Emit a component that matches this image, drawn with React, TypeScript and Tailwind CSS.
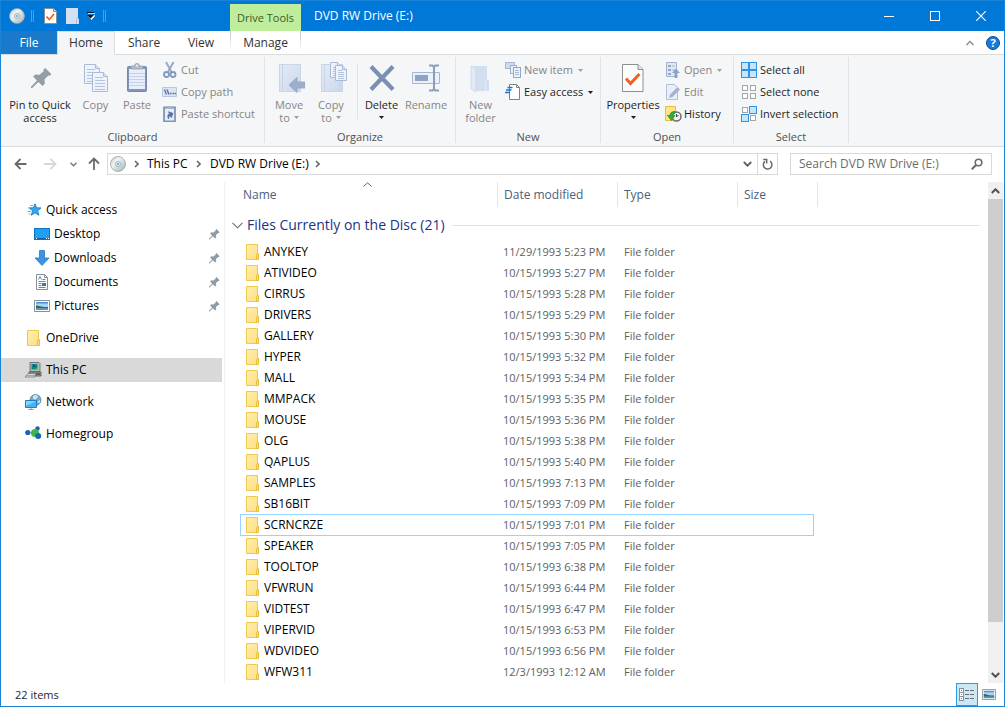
import React, { type ReactNode } from "react";

/* ---------- drawing helpers ---------- */

type ArtProps = { w: number; h: number; crisp?: boolean; children: ReactNode };

function Art({ w, h, crisp, children }: ArtProps) {
  return (
    <svg
      width={w}
      height={h}
      viewBox={`0 0 ${w} ${h}`}
      fill="none"
      aria-hidden="true"
      className="shrink-0"
      shapeRendering={crisp ? "crispEdges" : "auto"}
    >
      {children}
    </svg>
  );
}

const PIN_PATH =
  "M14.2 0L20.4 6.3L18.8 7.8L17.4 7.4L13.4 11.6L13.8 15.6L11.6 18L7.4 14L1.2 20L0 20V18.8L6 12.6L2 8.6L4.4 6.4L8.6 6.8L12.8 3L12.4 1.6Z";

function Disc() {
  return (
    <Art w={16} h={16}>
      <defs>
        <linearGradient id="disc" x1="0" y1="0" x2="1" y2="1">
          <stop offset="0" stopColor="#b9c0c4" />
          <stop offset=".35" stopColor="#f1f3f3" />
          <stop offset=".6" stopColor="#cfdcd8" />
          <stop offset="1" stopColor="#a9b0b4" />
        </linearGradient>
      </defs>
      <circle cx="8" cy="8" r="7.5" fill="url(#disc)" stroke="#9aa1a6" strokeWidth=".8" />
      <circle cx="8" cy="8" r="2.6" fill="#d5e6ee" stroke="#8fb6cc" strokeWidth=".8" />
      <circle cx="8" cy="8" r="1" fill="#6aa6c8" />
    </Art>
  );
}

function FolderIcon() {
  return (
    <Art w={13} h={16}>
      <defs>
        <linearGradient id="fold" x1="0" y1="0" x2="1" y2="1">
          <stop offset="0" stopColor="#ffefb0" />
          <stop offset="1" stopColor="#ffdf80" />
        </linearGradient>
      </defs>
      <path d="M.5 .5H11.5V15.5H.5Z" fill="url(#fold)" stroke="#efc94c" />
      <path d="M10.5 15.5V11L11.5 9.5H12.5V15.5Z" fill="#ffe28a" stroke="#e8bd3a" />
    </Art>
  );
}

function Pin() {
  return (
    <svg width={11} height={11} viewBox="0 0 21 21" aria-hidden="true" className="shrink-0">
      <path d={PIN_PATH} fill="#8f9ca6" />
    </svg>
  );
}

const PinLarge = () => (
  <Art w={32} h={32}>
    <path transform="translate(7 7)" d={PIN_PATH} fill="#929da5" />
  </Art>
);

function Sheet({ x, y, w, h, step }: { x: number; y: number; w: number; h: number; step: number }) {
  const lines: number[] = [];
  for (let ly = y + 5; ly < y + h - 2; ly += step) lines.push(ly);
  return (
    <g>
      <path
        d={`M${x + 0.5} ${y + 0.5}h${w - 5}l4 4v${h - 5}h${-(w - 1)}z`}
        fill="#eef3fb"
        stroke="#a9bbd8"
      />
      <path d={`M${x + w - 4.5} ${y + 0.5}v4h4`} fill="#d9e3f2" stroke="#a9bbd8" />
      {lines.map((ly) => (
        <path key={ly} d={`M${x + 3} ${ly + 0.5}h${ly < y + 6 ? w - 8 : w - 6}`} stroke="#b4c3de" />
      ))}
    </g>
  );
}

const CopyLarge = () => (
  <Art w={32} h={32}>
    <Sheet x={4} y={3} w={16} h={20} step={3} />
    <Sheet x={12} y={11} w={16} h={20} step={3} />
  </Art>
);

const PasteLarge = () => (
  <Art w={32} h={32}>
    <rect x="6.5" y="5.5" width="19" height="25" rx="1" fill="#8194b8" stroke="#7588ad" />
    <rect x="8" y="8" width="16" height="20" fill="#e8effa" />
    {[12, 15, 18, 21, 24].map((y) => (
      <path key={y} d={`M8 ${y + 0.5}h16`} stroke="#c3d2ea" />
    ))}
    <path d="M10 8V5h3.5a2.5 2.5 0 0 1 5 0H22V8Z" fill="#b3bccb" stroke="#939fb5" strokeWidth=".8" />
    <circle cx="16" cy="4.6" r="1" fill="#f5f6f7" />
  </Art>
);

const PaleFolder = ({ x }: { x: number }) => (
  <g>
    <defs>
      <linearGradient id="pale" x1="0" y1="0" x2="1" y2="1">
        <stop offset="0" stopColor="#e4ebf6" />
        <stop offset="1" stopColor="#cbd8ea" />
      </linearGradient>
    </defs>
    <rect x={x + 0.5} y="3.5" width="21" height="27" fill="url(#pale)" stroke="#c9d5e8" />
    <path d={`M${x + 3.5} 3.5v27M${x + 18.5} 30.5v-9l3-2`} stroke="#c6d3e7" />
  </g>
);

const MoveLarge = () => (
  <Art w={32} h={32}>
    <PaleFolder x={6} />
    <path d="M16 24L24 16.5V21H32V27H24V31.5Z" fill="#9dafcb" stroke="#8fa3c2" strokeWidth=".8" />
  </Art>
);

const CopyToLarge = () => (
  <Art w={32} h={32}>
    <PaleFolder x={6} />
    <Sheet x={15} y={1} w={12} h={16} step={2} />
    <Sheet x={20} y={4} w={12} h={16} step={2} />
  </Art>
);

const DeleteLarge = () => (
  <Art w={32} h={32}>
    <path d="M5 5.5L27 28.5M27 5.5L5 28.5" stroke="#7b8fb4" strokeWidth="4.2" />
  </Art>
);

const RenameLarge = () => (
  <Art w={32} h={32}>
    <path d="M2.500 11.500h27v11h-27z" fill="#eaf1fb" stroke="#a6b8d6" />
    <path d="M5 14h13v6H5z" fill="#8fa3c5" />
    <path
      d="M19 4.500h3.500l1.500 1.500 1.500-1.500H29M19 29.500h3.500l1.500-1.500 1.500 1.500H29M24 6v22"
      stroke="#8a9dbf"
      strokeWidth="2"
    />
  </Art>
);

const NewFolderLarge = () => (
  <Art w={32} h={32}>
    <path d="M8 5H22V18L24 20V30H8Z" fill="#d3dfee" />
    <path d="M6 5L11 8V31L6 28Z" fill="#e2eaf5" stroke="#c9d6e8" strokeWidth=".8" />
    <path d="M20.500 30V20.500L22 18.500" stroke="#e3ebf5" />
  </Art>
);

const PropertiesLarge = () => (
  <Art w={32} h={32}>
    <path d="M5.500 3.500H21l5 5V30.500H5.500Z" fill="#fdfdfd" stroke="#8b8f93" />
    <path d="M21 3.500V8.500H26" fill="#e3e5e7" stroke="#8b8f93" />
    <path d="M9 17.500L13.500 22.500L22.500 13" stroke="#f2611c" strokeWidth="3" />
  </Art>
);

const CutIcon = () => (
  <Art w={16} h={16}>
    <path d="M4 0L9.500 10M11.500 0L6 10" stroke="#9aaac5" strokeWidth="2" />
    <circle cx="4.500" cy="12.500" r="2.500" stroke="#8398bd" strokeWidth="1.800" />
    <circle cx="11" cy="12.500" r="2.500" stroke="#8398bd" strokeWidth="1.800" />
  </Art>
);

const CopyPathIcon = () => (
  <Art w={16} h={16}>
    <path d="M.5 3.500h14v9H.5z" fill="#dbe5f4" stroke="#b9c8e0" />
    <path d="M2.500 5.500l2 5M5 5.500l2 5" stroke="#5f749c" strokeWidth="1.400" />
    <path d="M8 9.500h1.500M10.500 9.500H12M12.500 9.500h1.500" stroke="#5f749c" strokeWidth="1.500" />
  </Art>
);

const PasteShortcutIcon = () => (
  <Art w={16} h={16}>
    <path d="M2 1.500h11v14H2z" fill="#e4ecf8" stroke="#8195b9" strokeWidth="1.800" />
    <path d="M5 0h5v3H5z" fill="#a9b4c8" />
    <path
      d="M5 12c0-3 1-4.500 3-4.500V5.500l3.500 3.200L8 12V9.700C6.500 9.700 6 10.500 5 12Z"
      fill="#5b719c"
      stroke="#5b719c"
      strokeWidth=".6"
      transform="rotate(-25 8 9)"
    />
  </Art>
);

const NewItemIcon = () => (
  <Art w={16} h={16} crisp>
    <path d="M.5 .5h9v6h-9z" fill="#cfdbee" stroke="#a9b9d5" />
    <path d="M5.500 3.500h6v8h-6z" fill="#e8eff9" stroke="#a0b1cf" />
    <path d="M8.500 5.500h7v10h-7z" fill="#eef3fb" stroke="#94a7c9" />
    <path d="M10 8.500h4M10 10.500h4M10 12.500h4" stroke="#a9b9d5" />
  </Art>
);

const EasyAccessIcon = () => (
  <Art w={16} h={16}>
    <path d="M4.500 .5h7l3 3v12h-10z" fill="#fff" stroke="#7f8386" />
    <path d="M11.500 .5v3h3" stroke="#7f8386" />
    <path d="M2.500 3.500h5M1 6h5.500M0 8.500h5" stroke="#1979ca" strokeWidth="1.400" />
  </Art>
);

const OpenIcon = () => (
  <Art w={16} h={16}>
    <path d="M1.500 .5h10v14h-10z" fill="#dfe8f5" stroke="#a3b4d1" />
    <path d="M3 3h3v2H3zM3 7h3v2H3zM3 11h3v2H3z" fill="#94a7c9" />
    <path d="M7 4h3M7 8h3" stroke="#a3b4d1" />
    <path d="M7 11l4-4.500 4 4.500h-2.500v5H9.500v-5z" fill="#8fa3c5" />
  </Art>
);

const EditIcon = () => (
  <Art w={16} h={16}>
    <path d="M1.500 .5h8l3 3v12h-11z" fill="#e8eff9" stroke="#b0bfd9" />
    <path d="M4 14l1-3.500L12.500 3l2.500 2.500L7.500 13z" fill="#a3b4d1" />
  </Art>
);

const HistoryIcon = () => (
  <Art w={17} h={16}>
    <path d="M.5 .5h10v14h-10z" fill="#ffe28a" stroke="#e8bd3a" />
    <circle cx="11.500" cy="10.500" r="4.500" fill="#f1f2f3" stroke="#6b6f73" strokeWidth="1.500" />
    <path d="M11.500 8v3l2-2" stroke="#444" />
    <path
      d="M10 5.500C6.500 5.500 5 7 5 9.500H2.500L6.500 14.500L10 9.500H8C8 8 8.500 7.500 10 7.500Z"
      fill="#2fae3c"
      stroke="#1c8528"
      strokeWidth=".7"
    />
  </Art>
);

function SelectIcon({ on }: { on: boolean[] }) {
  const at = [
    [1, 1],
    [9, 1],
    [1, 9],
    [9, 9],
  ];
  return (
    <Art w={16} h={16} crisp>
      {at.map(([x, y], i) =>
        on[i] ? (
          <rect key={i} x={x - 0.5} y={y - 0.5} width={7} height={7} fill="#c5e5fb" stroke="#2e95e6" />
        ) : (
          <rect key={i} x={x + 0.5} y={y + 0.5} width={5} height={5} fill="#fdfdfd" stroke="#a3a6a9" />
        ),
      )}
      {on.every(Boolean) && <path d="M0 7.500h16M7.500 0v16" stroke="#2e95e6" strokeWidth="2" />}
    </Art>
  );
}

const QuickAccessIcon = () => (
  <Art w={16} h={16}>
    <path
      d="M9 1.800l1.600 4 4.400.1-3.400 2.900 1.300 4.500-3.900-2.500-3.700 2.500 1.300-4.500L3.200 5.900l4.200-.1z"
      fill="#35a5ee"
      stroke="#1b7fcb"
      strokeWidth=".9"
    />
    <path d="M4 3.500h3M2 6h2M1.500 9.500h3.500M2.500 12h2" stroke="#5fb8ef" />
  </Art>
);

const DesktopIcon = () => (
  <Art w={16} h={12} crisp>
    <path d="M.5 .5h15v11H.5z" fill="#1fa0f5" stroke="#0d74c4" />
    <path d="M1 10.500h14" stroke="#0b62a8" />
    <path d="M2 10.500h1M12 10.500h1M13.500 10.500h1" stroke="#fff" />
  </Art>
);

const DownloadsIcon = () => (
  <Art w={16} h={16}>
    <path d="M5.500 .5h5v7.500h4.500L8 15.500 1 8h4.500z" fill="#3b94e4" stroke="#2a78c2" strokeWidth=".8" />
  </Art>
);

const DocumentsIcon = () => (
  <Art w={16} h={16}>
    <path d="M2.500 .5h8l3 3v12h-11z" fill="#fff" stroke="#8b8f93" />
    <path d="M10.500 .5v3h3" stroke="#8b8f93" />
    <path d="M4.500 5.500L6 2.500l1.500 3M8.500 5.500h3M4.500 7.500h7M4.500 9.500h3M4.500 11.500h3M4.500 13.500h7" stroke="#3d93d8" />
    <path d="M8 9h4v3H8z" fill="#3a7a9e" />
  </Art>
);

const PicturesIcon = ({ small }: { small?: boolean }) => (
  <Art w={small ? 14 : 16} h={small ? 11 : 12}>
    <g transform={small ? "scale(.875 .917)" : undefined}>
      <path d="M.5 .5h15v11H.5z" fill="#fff" stroke="#8b8f93" />
      <path d="M2 2h12v8H2z" fill="#a5d3f5" />
      <path d="M2 2h12v1.500H2z" fill="#4e8fdc" />
      <path d="M2 5.500C5 5.500 7 7.500 14 7v1.500H2z" fill="#2e6b4f" />
      <path d="M2 8.500h12V10H2z" fill="#5b93c0" />
    </g>
  </Art>
);

const ComputerIcon = () => (
  <Art w={17} h={16}>
    <path d="M5 .5h9l1 1v8H5z" fill="#b9bdb9" stroke="#5d605d" strokeWidth=".8" />
    <path d="M6.500 2h6v5.500h-6z" fill="#0a8a8a" />
    <path d="M8 3h2v2H8z" fill="#1b3fa0" />
    <path d="M11 6h1.500v1.500H11z" fill="#19e04b" />
    <path d="M4 10h12v4H9L4 12z" fill="#9b9e9b" stroke="#4e514e" strokeWidth=".8" />
    <path d="M11 12h4" stroke="#222" />
    <path d="M0 15l3-3.500h8L9.500 15z" fill="#d8dad8" stroke="#6b6e6b" strokeWidth=".7" />
    <path d="M2.500 13.500h7" stroke="#777" strokeDasharray="1 1" />
  </Art>
);

const NetworkIcon = () => (
  <Art w={17} h={16}>
    <circle cx="10.500" cy="6" r="5.500" fill="#6ea9cf" stroke="#4d7f9f" strokeWidth=".7" />
    <path d="M8 2c2-1.500 4-1 5 .5l-2 3-3-.5zM12 8l3-2v3z" fill="#cfe6d8" />
    <path d="M.5 6.500h11v7H.5z" fill="#49b1f3" stroke="#1c7fc8" />
    <path d="M1 7l10 0L1 12z" fill="#8dd0fa" />
    <path d="M3.500 15.500h5M6 14v1" stroke="#8c9aa5" />
  </Art>
);

const HomegroupIcon = () => (
  <Art w={17} h={16}>
    <path d="M3 7l7-1M12 3l-1 4M12 11l-2-3" stroke="#8cc7a5" />
    <circle cx="2.800" cy="6.500" r="2.600" fill="#1666b4" />
    <circle cx="12.500" cy="2.500" r="2.200" fill="#1666b4" />
    <circle cx="10" cy="7" r="4" fill="#3fb54a" />
    <circle cx="13.200" cy="10" r="3" fill="#1666b4" />
  </Art>
);

type ChevronProps = { d: string; w: number; h: number; color?: string; width?: number };

const Chevron = ({ d, w, h, color = "#5f5f5f", width = 1.5 }: ChevronProps) => (
  <Art w={w} h={h}>
    <path d={d} stroke={color} strokeWidth={width} />
  </Art>
);

const Caret = ({ muted }: { muted?: boolean }) => (
  <Art w={5} h={3}>
    <path d="M0 0h5L2.500 3z" fill={muted ? "#a0a0a0" : "#1e1e1e"} />
  </Art>
);

/* ---------- ribbon ---------- */

type BigProps = { icon: ReactNode; width: string; line1: string; line2?: string; caret?: boolean; muted?: boolean };

function BigButton({ icon, width, line1, line2, caret, muted }: BigProps) {
  return (
    <button
      type="button"
      className={`${width} ${muted ? "text-[#858585]" : "text-[#1e1e1e]"} flex shrink-0 flex-col items-center pt-1.5 leading-[13px] whitespace-nowrap`}
    >
      {icon}
      <span className="mt-[5px]">{line1}</span>
      <span className="flex h-[13px] items-center gap-1">
        {line2}
        {caret && <Caret muted={muted} />}
      </span>
    </button>
  );
}

type SmallProps = { icon: ReactNode; label: string; caret?: boolean; muted?: boolean };

function SmallButton({ icon, label, caret, muted }: SmallProps) {
  return (
    <button
      type="button"
      className={`${muted ? "text-[#858585]" : "text-[#1e1e1e]"} flex h-[22px] items-center whitespace-nowrap`}
    >
      <span className="w-[19px]">{icon}</span>
      {label}
      {caret && (
        <span className="ml-[5px]">
          <Caret muted={muted} />
        </span>
      )}
    </button>
  );
}

function Group({ title, width, children }: { title: string; width: string; children: ReactNode }) {
  return (
    <section aria-label={title} className={`${width} flex shrink-0`}>
      <div className="flex min-w-0 flex-1 flex-col">
        <div className="flex h-[73px]">{children}</div>
        <div className="h-[18px] text-center leading-[18px] text-[#505050]">{title}</div>
      </div>
      <div className="mt-0.5 h-[86px] w-px bg-[#e2e3e4]" />
    </section>
  );
}

const Stack = ({ children }: { children: ReactNode }) => (
  <div className="flex flex-col items-start pt-1">{children}</div>
);

function Ribbon() {
  return (
    <div className="flex h-[92px] shrink-0 border-b border-[#dadbdc] bg-[#f5f6f7] text-[11px]">
      <Group title="Clipboard" width="w-[264px]">
        <BigButton icon={<PinLarge />} width="w-[78px]" line1="Pin to Quick" line2="access" />
        <BigButton icon={<CopyLarge />} width="w-[33px]" line1="Copy" muted />
        <BigButton icon={<PasteLarge />} width="w-[50px]" line1="Paste" muted />
        <Stack>
          <SmallButton icon={<CutIcon />} label="Cut" muted />
          <SmallButton icon={<CopyPathIcon />} label="Copy path" muted />
          <SmallButton icon={<PasteShortcutIcon />} label="Paste shortcut" muted />
        </Stack>
      </Group>
      <Group title="Organize" width="w-[191px]">
        <BigButton icon={<MoveLarge />} width="w-[48px]" line1="Move" line2="to" caret muted />
        <BigButton icon={<CopyToLarge />} width="w-[36px]" line1="Copy" line2="to" caret muted />
        <div className="mt-2 ml-2 h-[56px] w-px bg-[#e2e3e4]" />
        <BigButton icon={<DeleteLarge />} width="w-[47px]" line1="Delete" caret />
        <BigButton icon={<RenameLarge />} width="w-[42px]" line1="Rename" muted />
      </Group>
      <Group title="New" width="w-[145px]">
        <BigButton icon={<NewFolderLarge />} width="w-[49px]" line1="New" line2="folder" muted />
        <Stack>
          <SmallButton icon={<NewItemIcon />} label="New item" caret muted />
          <SmallButton icon={<EasyAccessIcon />} label="Easy access" caret />
        </Stack>
      </Group>
      <Group title="Open" width="w-[133px]">
        <BigButton icon={<PropertiesLarge />} width="w-[64px]" line1="Properties" caret />
        <Stack>
          <SmallButton icon={<OpenIcon />} label="Open" caret muted />
          <SmallButton icon={<EditIcon />} label="Edit" muted />
          <SmallButton icon={<HistoryIcon />} label="History" />
        </Stack>
      </Group>
      <Group title="Select" width="w-[115px]">
        <div className="pl-[7px]">
          <Stack>
            <SmallButton icon={<SelectIcon on={[true, true, true, true]} />} label="Select all" />
            <SmallButton icon={<SelectIcon on={[false, false, false, false]} />} label="Select none" />
            <SmallButton icon={<SelectIcon on={[false, true, true, false]} />} label="Invert selection" />
          </Stack>
        </div>
      </Group>
    </div>
  );
}

/* ---------- title bar and tabs ---------- */

function TitleBar() {
  return (
    <header className="flex h-[30px] shrink-0 bg-[#0078d7] text-white">
      <div className="flex w-[229px] items-center pl-2">
        <Disc />
        <span className="ml-1.5 h-3 w-[3px] border-x border-[#4d9fe2]" />
        <button type="button" aria-label="Properties" className="ml-2.5">
          <Art w={13} h={16}>
            <path d="M.5 .5h9l3 3v12H.5z" fill="#fff" stroke="#8b8f93" />
            <path d="M9.500 .5v3h3" fill="#ddd" stroke="#8b8f93" />
            <path d="M2.500 8.500l2.800 3 4.700-5.500" stroke="#f2611c" strokeWidth="1.800" />
          </Art>
        </button>
        <button type="button" aria-label="New folder" className="ml-[9px]">
          <Art w={14} h={16}>
            <path d="M0 0h12v10l1 1v5H0z" fill="#d3e0f2" />
            <path d="M10.500 16v-5l1-1.500" stroke="#a9bedd" />
          </Art>
        </button>
        <button type="button" aria-label="Customize Quick Access Toolbar" className="ml-[7px]">
          <Art w={8} h={8}>
            <path d="M1 1.500h7M1 3.500h7L4.500 7.500z" fill="#fff" stroke="#fff" strokeOpacity=".7" />
            <path d="M0 .5h7" stroke="#111" />
            <path d="M0 3h7L3.500 6.500z" fill="#111" />
          </Art>
        </button>
        <span className="ml-2 h-3 w-[3px] border-x border-[#4d9fe2]" />
      </div>
      <div className="mt-[3px] w-[71px] bg-[#beed9b] text-center text-[11px] leading-[28px] text-[#3d5a2b]">
        Drive Tools
      </div>
      <h1 className="ml-[13px] flex-1 leading-[29px]">DVD RW Drive (E:)</h1>
      <div className="flex">
        <button type="button" aria-label="Minimize" className="flex w-[46px] items-center justify-center">
          <Art w={10} h={10} crisp>
            <path d="M0 5.500h10" stroke="#fff" />
          </Art>
        </button>
        <button type="button" aria-label="Maximize" className="flex w-[46px] items-center justify-center">
          <Art w={10} h={10} crisp>
            <path d="M.5 .5h9v9h-9z" stroke="#fff" />
          </Art>
        </button>
        <button type="button" aria-label="Close" className="flex w-[46px] items-center justify-center">
          <Art w={10} h={10}>
            <path d="M.2 .2l9.600 9.600M9.800 .2L.2 9.800" stroke="#fff" strokeWidth="1.200" />
          </Art>
        </button>
      </div>
    </header>
  );
}

function Tabs() {
  return (
    <nav aria-label="Ribbon tabs" className="flex h-6 shrink-0 leading-[22px] text-[#333]">
      <button type="button" className="w-[56px] border-b border-[#dadbdc] bg-[#1979ca] pt-px text-white">
        File
      </button>
      <button type="button" className="w-[58px] border-x border-t border-[#dadbdc] bg-[#f5f6f7] pb-px">
        Home
      </button>
      <button type="button" className="w-[58px] border-b border-[#dadbdc] pt-px">
        Share
      </button>
      <button type="button" className="w-[56px] border-b border-[#dadbdc] pt-px">
        View
      </button>
      <div className="flex w-[72px] border-b border-[#dadbdc]">
        <span className="ml-px h-5 w-px bg-linear-to-b from-[#c4c4c4] to-white" />
        <button type="button" className="flex-1 pt-px">
          Manage
        </button>
        <span className="h-5 w-px bg-linear-to-b from-[#c4c4c4] to-white" />
      </div>
      <div className="flex flex-1 items-center justify-end gap-3 border-b border-[#dadbdc] pr-1">
        <button type="button" aria-label="Minimize the Ribbon">
          <Chevron w={8} h={6} d="M.5 5L4 1.500L7.500 5" color="#8b8b8b" width={1.4} />
        </button>
        <button
          type="button"
          aria-label="Help"
          className="flex size-[14px] items-center justify-center rounded-full border border-[#0b4f93] bg-[#1979d8] text-[11px] leading-none font-bold text-white"
        >
          ?
        </button>
      </div>
    </nav>
  );
}

/* ---------- address bar ---------- */

const Arrow = ({ d, color, size }: { d: string; color: string; size: number }) => (
  <Art w={size} h={14}>
    <path d={d} stroke={color} strokeWidth="1.800" />
  </Art>
);

const CrumbSep = () => <Chevron w={5} h={8} d="M1 1L4 4L1 7" color="#6a6a6a" width={1.6} />;

function AddressBar() {
  return (
    <div className="flex h-[35px] shrink-0 items-start pt-1.5 pr-3">
      <div className="flex h-[22px] w-[106px] items-center pl-[13px]">
        <button type="button" aria-label="Back">
          <Arrow size={13} color="#6b6b6b" d="M12.500 7H1.500M6.500 2L1.500 7L6.500 12" />
        </button>
        <button type="button" aria-label="Forward" className="ml-[17px]">
          <Arrow size={13} color="#d8d8d8" d="M0 7H11.500M6.500 2L11.500 7L6.500 12" />
        </button>
        <button type="button" aria-label="Recent locations" className="ml-[13px]">
          <Chevron w={7} h={5} d="M.5 .8L3.500 3.800L6.500 .8" color="#7a7a7a" />
        </button>
        <button type="button" aria-label="Up" className="ml-[11px]">
          <Arrow size={12} color="#6b6b6b" d="M6 13V1.500M1 6.500L6 1.500L11 6.500" />
        </button>
      </div>
      <div className="flex h-[22px] flex-1 border border-[#d9d9d9] bg-white text-black">
        <div className="flex flex-1 items-center pl-0.5">
          <Disc />
          <span className="ml-2">
            <CrumbSep />
          </span>
          <button type="button" className="ml-2 w-[42px] text-left whitespace-nowrap">
            This PC
          </button>
          <span className="ml-[7px]">
            <CrumbSep />
          </span>
          <button type="button" className="ml-[9px] text-left whitespace-nowrap">
            DVD RW Drive (E:)
          </button>
          <span className="ml-1.5">
            <CrumbSep />
          </span>
        </div>
        <button type="button" aria-label="Previous locations" className="flex w-[19px] items-center justify-center">
          <Chevron w={9} h={6} d="M.8 1L4.500 4.700L8.200 1" width={1.8} />
        </button>
        <button
          type="button"
          aria-label="Refresh"
          className="flex w-5 items-center justify-center border-l border-[#d9d9d9]"
        >
          <Art w={11} h={12}>
            <path d="M8 3.200a4.300 4.300 0 1 1 -5 .2" stroke="#6a6a6a" strokeWidth="1.500" />
            <path d="M1.200 1.500H4.700V5.500" stroke="#6a6a6a" strokeWidth="1.500" />
          </Art>
        </button>
      </div>
      <label className="ml-3 flex h-[22px] w-[202px] items-center border border-[#d9d9d9] pr-2 pl-2">
        <input
          type="search"
          aria-label="Search DVD RW Drive (E:)"
          placeholder="Search DVD RW Drive (E:)"
          className="min-w-0 flex-1 outline-none placeholder:text-[#6d6d6d]"
        />
        <Art w={12} h={12}>
          <circle cx="7.500" cy="4.500" r="3.300" stroke="#6a6a6a" strokeWidth="1.600" />
          <path d="M5 7L.8 11.200" stroke="#6a6a6a" strokeWidth="2" />
        </Art>
      </label>
    </div>
  );
}

/* ---------- navigation pane ---------- */

type NavItemProps = {
  icon: ReactNode;
  label: string;
  child?: boolean;
  pinned?: boolean;
  selected?: boolean;
  gap?: boolean;
};

function NavItem({ icon, label, child, pinned, selected, gap }: NavItemProps) {
  return (
    <li className={gap ? "mt-2" : ""}>
      <a
        href="#"
        className={`${child ? "pl-8" : "pl-6"} ${selected ? "bg-[#d9d9d9]" : ""} flex h-6 items-center pr-0.5`}
      >
        <span className="mr-1 flex w-[17px] justify-center">{icon}</span>
        <span className="flex-1">{label}</span>
        {pinned && <Pin />}
      </a>
    </li>
  );
}

function NavPane() {
  return (
    <nav aria-label="Folders" className="w-[224px] shrink-0 border-r border-[#f0f0f0] pt-4 pr-0.5 text-black">
      <ul>
        <NavItem icon={<QuickAccessIcon />} label="Quick access" />
        <NavItem icon={<DesktopIcon />} label="Desktop" child pinned />
        <NavItem icon={<DownloadsIcon />} label="Downloads" child pinned />
        <NavItem icon={<DocumentsIcon />} label="Documents" child pinned />
        <NavItem icon={<PicturesIcon />} label="Pictures" child pinned />
        <NavItem icon={<FolderIcon />} label="OneDrive" gap />
        <NavItem icon={<ComputerIcon />} label="This PC" selected gap />
        <NavItem icon={<NetworkIcon />} label="Network" gap />
        <NavItem icon={<HomegroupIcon />} label="Homegroup" gap />
      </ul>
    </nav>
  );
}

/* ---------- file list ---------- */

const FILES: [string, string][] = [
  ["ANYKEY", "11/29/1993 5:23 PM"],
  ["ATIVIDEO", "10/15/1993 5:27 PM"],
  ["CIRRUS", "10/15/1993 5:28 PM"],
  ["DRIVERS", "10/15/1993 5:29 PM"],
  ["GALLERY", "10/15/1993 5:30 PM"],
  ["HYPER", "10/15/1993 5:32 PM"],
  ["MALL", "10/15/1993 5:34 PM"],
  ["MMPACK", "10/15/1993 5:35 PM"],
  ["MOUSE", "10/15/1993 5:36 PM"],
  ["OLG", "10/15/1993 5:38 PM"],
  ["QAPLUS", "10/15/1993 5:40 PM"],
  ["SAMPLES", "10/15/1993 7:13 PM"],
  ["SB16BIT", "10/15/1993 7:09 PM"],
  ["SCRNCRZE", "10/15/1993 7:01 PM"],
  ["SPEAKER", "10/15/1993 7:05 PM"],
  ["TOOLTOP", "10/15/1993 6:38 PM"],
  ["VFWRUN", "10/15/1993 6:44 PM"],
  ["VIDTEST", "10/15/1993 6:47 PM"],
  ["VIPERVID", "10/15/1993 6:53 PM"],
  ["WDVIDEO", "10/15/1993 6:56 PM"],
  ["WFW311", "12/3/1993 12:12 AM"],
];

const FOCUSED = "SCRNCRZE";

function FileTable() {
  return (
    <table className="w-full table-fixed border-separate border-spacing-0 text-left">
      <colgroup>
        <col className="w-[273px]" />
        <col className="w-[120px]" />
        <col className="w-[120px]" />
        <col className="w-[80px]" />
        <col />
      </colgroup>
      <thead>
        <tr className="h-[25px] text-[#4c607a]">
          <th scope="col" className="relative border-r border-[#e5e5e5] p-0 pl-[18px] font-normal">
            Name
            <span className="absolute top-0 left-[138px]">
              <Chevron w={9} h={5} d="M.5 4.500L4.500 .8L8.500 4.500" color="#5f5f5f" width={1} />
            </span>
          </th>
          <th scope="col" className="border-r border-[#e5e5e5] p-0 pl-1.5 font-normal">
            Date modified
          </th>
          <th scope="col" className="border-r border-[#e5e5e5] p-0 pl-1.5 font-normal">
            Type
          </th>
          <th scope="col" className="border-r border-[#e5e5e5] p-0 pl-1.5 font-normal">
            Size
          </th>
          <td />
        </tr>
      </thead>
      <tbody>
        <tr className="h-[34px]">
          <th scope="rowgroup" colSpan={5} className="p-0 pt-0.5 font-normal">
            <span className="flex items-center pr-2 pl-[7px]">
              <Chevron w={11} h={7} d="M.5 .8L5.500 5.800L10.500 .8" color="#6a6a6a" width={1.1} />
              <span className="ml-1 text-[14px] leading-5 text-[#1e3287]">Files Currently on the Disc (21)</span>
              <span className="ml-[7px] h-px flex-1 bg-[#e2e2e2]" />
            </span>
          </th>
        </tr>
        {FILES.map(([name, date]) => (
          <tr key={name} className="h-[21px] text-[11px] text-[#606060]">
            <td className="relative p-0 pl-[21px] text-[12px] text-black">
              {name === FOCUSED && (
                <span className="pointer-events-none absolute top-0 left-[15px] h-[22px] w-[574px] border border-[#99d1ff]" />
              )}
              <span className="flex items-center gap-[5px]">
                <FolderIcon />
                {name}
              </span>
            </td>
            <td className="p-0 pl-[5px]">{date}</td>
            <td className="p-0 pl-1.5">File folder</td>
            <td className="p-0" />
            <td className="p-0" />
          </tr>
        ))}
      </tbody>
    </table>
  );
}

function ScrollBar() {
  return (
    <div className="mr-px flex w-[15px] shrink-0 flex-col bg-[#f0f0f0]">
      <button type="button" aria-label="Scroll up" className="flex h-[17px] items-center justify-center">
        <Chevron w={9} h={6} d="M.8 5L4.500 1.300L8.200 5" color="#505050" width={2} />
      </button>
      <div className="grid flex-1 grid-rows-[423fr_44fr]">
        <div className="bg-[#cdcdcd]" />
      </div>
      <button type="button" aria-label="Scroll down" className="flex h-[17px] items-center justify-center">
        <Chevron w={9} h={6} d="M.8 1L4.500 4.700L8.200 1" color="#505050" width={2} />
      </button>
    </div>
  );
}

function StatusBar() {
  return (
    <footer className="flex h-[23px] shrink-0 items-center pl-[14px] text-[11px] text-[#262626]">
      <span className="flex-1">22 items</span>
      <button
        type="button"
        aria-label="Details view"
        className="flex h-[23px] w-[22px] items-center justify-center border border-[#26a0da] bg-[#cce8f6]"
      >
        <Art w={16} h={13} crisp>
          <path d="M.5 .5h4v4h-4zM.5 4.500h4v4h-4zM.5 8.500h4v4h-4z" fill="#fff" stroke="#8b8f93" />
          <path d="M2 2.500h1" stroke="#555" />
          <path d="M2 6.500h1" stroke="#2e95e6" />
          <path d="M2 10.500h1" stroke="#d33" />
          <path d="M6 2.500h4M11 2.500h4M6 6.500h4M11 6.500h4M6 10.500h4M11 10.500h4" stroke="#6b6f73" />
        </Art>
      </button>
      <button type="button" aria-label="Large icons view" className="flex h-[23px] w-[22px] items-center justify-center">
        <PicturesIcon small />
      </button>
      <span className="w-1" />
    </footer>
  );
}

export default function App() {
  return (
    <div className="flex h-screen min-h-[480px] flex-col overflow-hidden border border-[#1883d7] bg-white font-['Open_Sans','Noto_Sans',sans-serif] text-[12px] leading-4">
      <TitleBar />
      <Tabs />
      <Ribbon />
      <AddressBar />
      <main className="flex min-h-0 flex-1">
        <NavPane />
        <div className="min-w-0 flex-1 overflow-hidden">
          <FileTable />
        </div>
        <ScrollBar />
      </main>
      <StatusBar />
    </div>
  );
}
